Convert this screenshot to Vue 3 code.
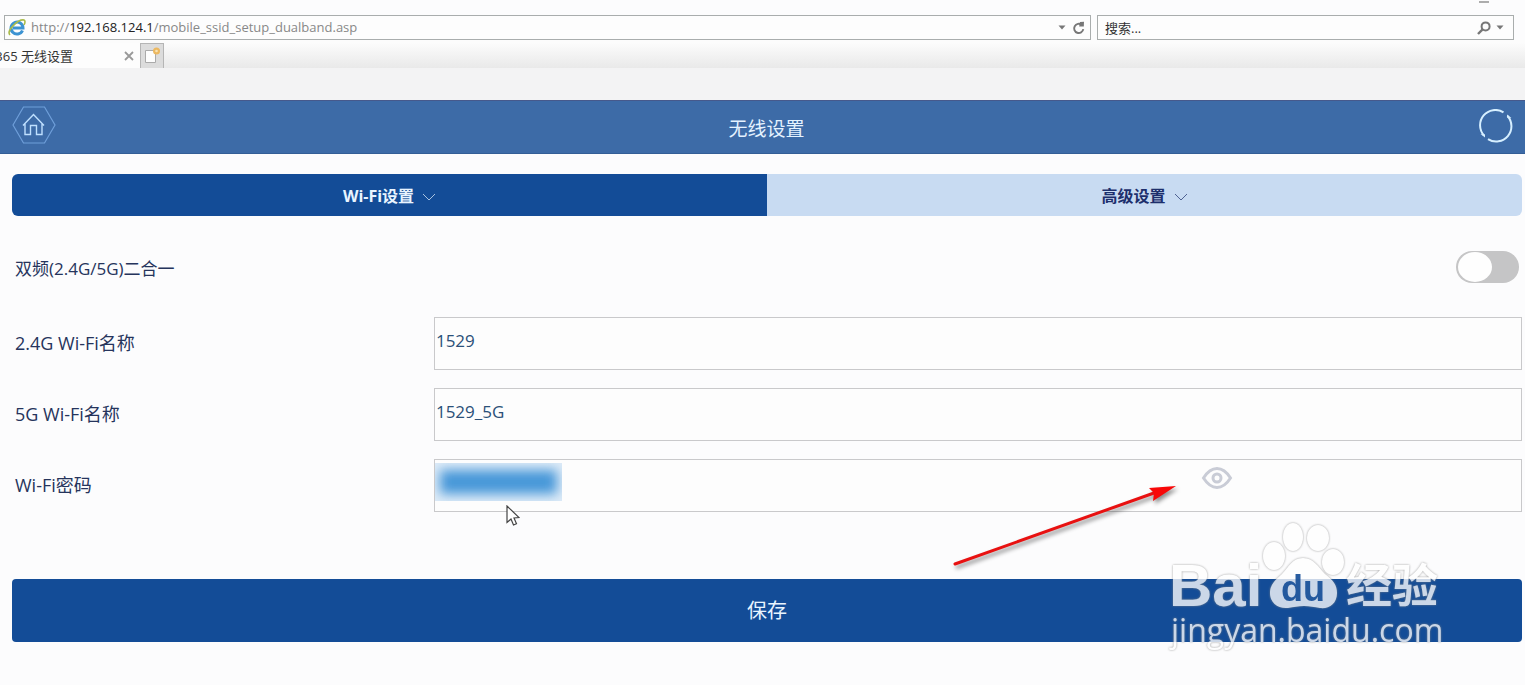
<template>
  <div class="browser">
    <div class="browser-bar">
      <svg class="minimize" viewBox="0 0 12 4" width="12" height="4">
        <path d="M1 2H11" stroke="#777" stroke-width="1.2" />
      </svg>
      <div class="bar-row">
        <div class="address-box">
          <svg class="ie-icon" viewBox="0 0 20 20" width="20" height="20">
            <path
              d="M15.5 12.5A6 6 0 1 1 16 10H6"
              fill="none"
              stroke="#3c93d2"
              stroke-width="3"
            />
            <path
              d="M3 17C-1 13 11 1 17 2c2 1 1 3 0 5"
              fill="none"
              stroke="#a9bb4a"
              stroke-width="1.6"
            />
          </svg>
          <div class="url">
            http://<span class="host">192.168.124.1</span
            >/mobile_ssid_setup_dualband.asp
          </div>
          <button class="icon-btn" type="button" aria-label="地址列表">
            <svg viewBox="0 0 8 5" width="8" height="5">
              <path d="M0.5 0.5h7L4 4.5z" fill="#777" />
            </svg>
          </button>
          <button class="icon-btn" type="button" aria-label="刷新">
            <svg viewBox="0 0 14 14" width="14" height="14">
              <path
                d="M11.3 8.2A4.6 4.6 0 1 1 9.6 3.8"
                fill="none"
                stroke="#777"
                stroke-width="1.9"
              />
              <path d="M8 1l4-.2-.2 4.600H7.200z" fill="#777" />
            </svg>
          </button>
        </div>
        <div class="search-box">
          <input
            v-model="keyword"
            class="search-input"
            type="text"
            aria-label="搜索"
            placeholder="搜索..."
          />
          <button class="icon-btn" type="button" aria-label="搜索">
            <svg viewBox="0 0 14 14" width="14" height="14">
              <circle
                cx="8.6"
                cy="5.4"
                r="4"
                fill="none"
                stroke="#777"
                stroke-width="2"
              />
              <path d="M5.6 8.4L1 13" stroke="#777" stroke-width="2.4" />
            </svg>
          </button>
          <button class="icon-btn" type="button" aria-label="搜索选项">
            <svg viewBox="0 0 8 5" width="8" height="5">
              <path d="M0.5 0.5h7L4 4.5z" fill="#777" />
            </svg>
          </button>
        </div>
      </div>
    </div>

    <div class="tab-strip">
      <div class="browser-tab">
        <div class="tab-title"><span>365 无线设置</span></div>
        <button class="close-btn" type="button" aria-label="关闭标签页">
          <svg viewBox="0 0 10 10" width="10" height="10">
            <path
              d="M1 1l8 8M9 1L1 9"
              fill="none"
              stroke="#999"
              stroke-width="1.8"
            />
          </svg>
        </button>
      </div>
      <button class="new-tab" type="button" aria-label="新建标签页">
        <svg viewBox="0 0 18 18" width="18" height="18">
          <path
            d="M2.5 3.5h10v12h-10z"
            fill="#fdfdfd"
            stroke="#aaa"
            stroke-width="1"
          />
          <circle cx="13.5" cy="4" r="3.5" fill="#ecb860" />
          <circle cx="13.5" cy="4" r="1.3" fill="#f8e2b4" />
        </svg>
      </button>
    </div>
    <div class="tool-band"></div>

    <header class="app-header">
      <a class="home-link" href="#" aria-label="首页">
        <svg viewBox="0 0 44 40" width="44" height="40">
          <path
            d="M1 20L11.5 2h21L43 20 32.5 38h-21z"
            fill="none"
            stroke="#6f9fda"
            stroke-width="1.2"
          />
          <path
            d="M11 20.5L21.5 9.5 32 20.5M13 19v10.500h5.500v-9h6v9H30V19"
            fill="none"
            stroke="#bfe0ff"
            stroke-width="1.4"
          />
        </svg>
      </a>
      <h1 class="title">无线设置</h1>
      <button class="refresh" type="button" aria-label="刷新状态">
        <svg viewBox="0 0 34 34" width="34" height="34">
          <path
            d="M24.5 3.300A15.300 15.300 0 0 0 5 26.500M9 30.200A15.300 15.300 0 0 0 28.500 7"
            fill="none"
            stroke="#d6efff"
            stroke-width="2"
          />
          <path
            d="M28 5.500l4.500 3.500-4.500-.5zM6 28.500L1.500 25l4.500.5z"
            fill="#d6efff"
          />
        </svg>
      </button>
    </header>

    <main class="content">
      <div class="tabs">
        <button
          v-for="tab in tabs"
          :key="tab.id"
          class="tab"
          :class="{ active: tab.id === activeTab }"
          type="button"
          @click="activeTab = tab.id"
        >
          {{ tab.label }}
          <svg class="chevron" viewBox="0 0 14 8" width="14" height="8">
            <path
              d="M1 1l6 6 6-6"
              fill="none"
              stroke="currentColor"
              stroke-width="1"
            />
          </svg>
        </button>
      </div>

      <form class="form" @submit.prevent>
        <div class="switch-row">
          <label for="merge">双频(2.4G/5G)二合一</label>
          <input id="merge" v-model="merged" class="switch" type="checkbox" />
        </div>

        <div class="field">
          <label for="ssid24">2.4G Wi-Fi名称</label>
          <input id="ssid24" v-model="ssid24" class="text-input" type="text" />
        </div>
        <div class="field">
          <label for="ssid5">5G Wi-Fi名称</label>
          <input id="ssid5" v-model="ssid5" class="text-input" type="text" />
        </div>
        <div class="field">
          <label for="password">Wi-Fi密码</label>
          <div class="password-box">
            <input
              id="password"
              v-model="password"
              class="text-input"
              type="password"
            />
            <div class="mask"><div class="mask-fill"></div></div>
            <button class="eye-btn" type="button" aria-label="显示密码">
              <svg viewBox="0 0 32 24" width="32" height="24">
                <path
                  d="M2.5 12Q8.5 2.5 16 2.5T29.5 12Q23.5 21.5 16 21.5T2.5 12z"
                  fill="none"
                  stroke="#c9ccd6"
                  stroke-width="3"
                />
                <circle
                  cx="16"
                  cy="12"
                  r="4"
                  fill="none"
                  stroke="#c9ccd6"
                  stroke-width="3"
                />
              </svg>
            </button>
            <svg class="arrow" viewBox="0 0 230 90" width="230" height="90">
              <path
                d="M5 83L204 12"
                stroke="#e81111"
                stroke-width="3"
                stroke-linecap="round"
              />
              <path d="M226 5L199 7l5 5-1 8z" fill="#f80808" />
            </svg>
            <svg class="cursor" viewBox="0 0 14 22" width="14" height="22">
              <path
                d="M1 1v16.5l4-3.5 2.5 6 3-1.3L8 13l5-.5z"
                fill="#fff"
                stroke="#444"
                stroke-width="1.2"
              />
            </svg>
          </div>
        </div>

        <button class="save-btn" type="submit">保存</button>
      </form>

      <svg class="watermark" viewBox="0 0 290 140" width="290" height="140">
        <g class="mark">
          <text x="4" y="86" class="logo-text">Bai</text>
          <ellipse cx="109" cy="36" rx="11" ry="14" />
          <ellipse cx="128" cy="17" rx="10" ry="14" />
          <ellipse cx="153" cy="18" rx="11" ry="13" />
          <ellipse cx="168" cy="42" rx="11" ry="13" />
          <path
            d="M138 38c11 0 15 9 22 16 8 6 12 11 12 19 0 11-8 16-17 15-6-1-10-2-16-2s-10 1-16 2c-10 1-18-5-18-15 0-8 5-13 12-19 7-7 10-16 21-16z"
          />
          <text x="181" y="82" class="cjk-text">经验</text>
          <text x="6" y="122" class="site-text">jingyan.baidu.com</text>
        </g>
        <text x="116" y="81" class="du-text">du</text>
      </svg>
    </main>
  </div>
</template>

<script setup>
import { ref } from "vue";

const tabs = [
  { id: "wifi", label: "Wi-Fi设置" },
  { id: "advanced", label: "高级设置" },
];

const activeTab = ref("wifi");
const keyword = ref("");
const merged = ref(false);
const ssid24 = ref("1529");
const ssid5 = ref("1529_5G");
const password = ref("");
</script>

<style>
body {
  background: #fcfcfd;
}
</style>

<style scoped>
.browser {
  font-family: "Open Sans", "Noto Sans CJK SC", sans-serif;
  font-size: 17px;
  color: #26345c;
}

.browser * {
  box-sizing: border-box;
}

button,
input {
  font-family: inherit;
  color: inherit;
}

button {
  padding: 0;
  border: 0;
  background: none;
}

svg {
  display: block;
  flex: none;
}

.browser-bar {
  padding: 0 11px 0 4px;
}

.minimize {
  margin: 0 24px 0 auto;
}

.bar-row {
  display: grid;
  grid-template-columns: 1087fr 417fr;
  gap: 6px;
  padding-top: 11px;
}

.address-box,
.search-box {
  display: flex;
  align-items: center;
  height: 25px;
  border: 1px solid #a9adad;
  background: #fdfdfd;
}

.address-box {
  gap: 4px;
  padding: 0 4px 0 2px;
}

.search-box {
  gap: 3px;
  padding: 0 7px;
}

.url {
  flex: 1;
  font-size: 13px;
  line-height: 23px;
  color: #888;
  white-space: nowrap;
}

.host {
  color: #222;
}

.icon-btn {
  display: flex;
  align-items: center;
  justify-content: center;
  min-width: 12px;
  height: 20px;
}

.search-input {
  flex: 1;
  min-width: 0;
  padding: 0;
  border: 0;
  outline: none;
  background: none;
  font-size: 13px;
  color: #333;
}

.search-input::placeholder {
  color: #333;
  opacity: 1;
}

.tab-strip {
  display: flex;
  align-items: flex-end;
  height: 28px;
  background: linear-gradient(#fcfcfc 10%, #e9e9e9);
}

.browser-tab {
  display: flex;
  align-items: center;
  justify-content: space-between;
  width: 140px;
  height: 25px;
  padding-right: 6px;
  background: #fdfdfd;
}

/* the tab is scrolled partly out on the left */
.tab-title {
  display: flex;
  justify-content: flex-end;
  width: 73px;
  overflow: hidden;
  font-size: 13px;
  color: #333;
  white-space: nowrap;
}

.new-tab {
  display: flex;
  align-items: center;
  justify-content: center;
  width: 24px;
  height: 25px;
  border: 1px solid #b5b5b5;
  border-bottom: 0;
  background: #dcdcdc;
}

.tool-band {
  height: 32px;
  background: #f3f3f4;
}

.app-header {
  display: grid;
  grid-template-columns: 1fr auto 1fr;
  align-items: center;
  height: 54px;
  padding: 0 12px;
  border-top: 1px solid #46598c;
  border-bottom: 1px solid #335e96;
  background: #3d6ba7;
}

.home-link {
  justify-self: start;
  padding-bottom: 4px;
}

.title {
  margin: 0;
  padding: 4px 0 0 8px;
  font-size: 19px;
  font-weight: 400;
  line-height: 28px;
  color: #e4f2ff;
}

.refresh {
  justify-self: end;
  padding-bottom: 3px;
}

.content {
  position: relative;
  padding: 20px 3px 43px 12px;
}

.tabs {
  display: flex;
  height: 42px;
  overflow: hidden;
  border-radius: 6px;
}

.tab {
  display: flex;
  flex: 1;
  align-items: center;
  justify-content: center;
  gap: 8px;
  background: #c8dbf2;
  font-size: 16px;
  font-weight: 700;
  color: #1d2f6c;
}

.tab.active {
  background: #134c97;
  color: #e8f4ff;
}

.chevron {
  margin-top: 4px;
  opacity: 0.7;
}

.form {
  display: flex;
  flex-direction: column;
  gap: 18px;
  padding-top: 35px;
}

.switch-row {
  display: flex;
  align-items: center;
  justify-content: space-between;
  height: 32px;
  margin-bottom: 16px;
  padding: 0 3px;
}

.switch {
  appearance: none;
  display: flex;
  align-items: center;
  width: 63px;
  height: 32px;
  margin: 0;
  padding: 0 2px;
  border-radius: 16px;
  background: #c5c5c6;
}

.switch::before {
  content: "";
  width: 34px;
  height: 30px;
  border-radius: 50%;
  background: #fefefe;
}

.switch:checked {
  justify-content: flex-end;
  background: #134c97;
}

.field {
  display: grid;
  grid-template-columns: 19fr 49fr;
  align-items: center;
}

.field label {
  padding: 0 0 3px 3px;
  font-size: 18px;
}

.text-input {
  display: block;
  width: 100%;
  height: 53px;
  padding: 0 1px 6px;
  border: 1px solid #c9c9cb;
  outline: none;
  background: #fdfdfd;
  font-size: 17px;
  color: #2b5078;
}

.password-box {
  position: relative;
}

.mask {
  position: absolute;
  top: 4px;
  left: 1px;
  width: 127px;
  height: 38px;
  overflow: hidden;
  background: #dfecf8;
}

.mask-fill {
  height: 24px;
  margin: 7px 5px;
  background: #4797d8;
  filter: blur(6px);
}

.eye-btn {
  position: absolute;
  top: 7px;
  right: 289px;
}

.arrow {
  position: absolute;
  top: 22px;
  right: 342px;
  filter: drop-shadow(2px 3px 2px rgba(0, 0, 0, 0.45));
  pointer-events: none;
}

.cursor {
  position: absolute;
  top: 46px;
  left: 72px;
  pointer-events: none;
}

.save-btn {
  height: 63px;
  margin-top: 49px;
  padding-bottom: 2px;
  border-radius: 4px;
  background: #134c97;
  font-size: 20px;
  color: #e8f4ff;
}

.watermark {
  position: absolute;
  right: 70px;
  bottom: 25px;
  pointer-events: none;
}

.mark {
  fill: #fff;
  opacity: 0.78;
  filter: drop-shadow(0 0 1px #888);
}

.logo-text {
  font-family: "Liberation Sans", sans-serif;
  font-size: 60px;
  font-weight: 700;
}

.cjk-text {
  font-family: "Noto Sans CJK SC", sans-serif;
  font-size: 46px;
  font-weight: 700;
}

.site-text {
  font-family: "Open Sans", sans-serif;
  font-size: 32px;
}

.du-text {
  font-family: "Liberation Sans", sans-serif;
  font-size: 36px;
  font-weight: 700;
  fill: #134c97;
  opacity: 0.9;
}
</style>
